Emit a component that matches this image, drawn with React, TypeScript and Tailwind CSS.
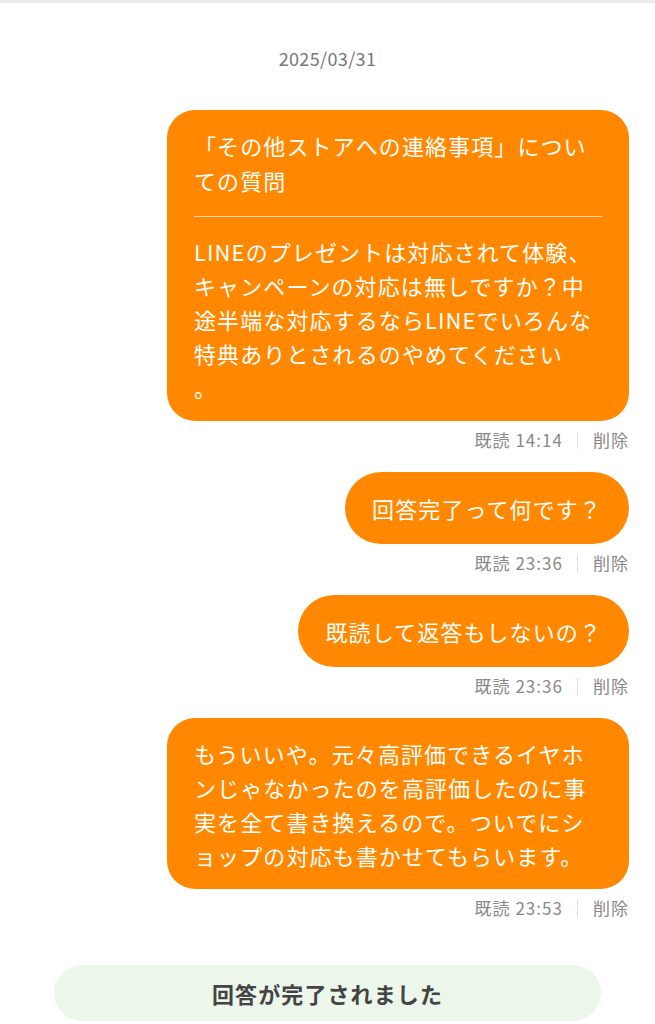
import React from 'react';

type Msg = {
  id: number;
  title?: string;
  body: React.ReactNode;
  time: string;
  multi?: boolean;
};

const messages: Msg[] = [
  {
    id: 1,
    title: '「その他ストアへの連絡事項」についての質問',
    body: (
      <>
        LINEのプレゼントは対応されて体験、キャンペーンの対応は無しですか？中途半端な対応するならLINEでいろんな特典ありとされるのやめてください
        <br />。
      </>
    ),
    time: '14:14',
    multi: true,
  },
  { id: 2, body: '回答完了って何です？', time: '23:36' },
  { id: 3, body: '既読して返答もしないの？', time: '23:36' },
  {
    id: 4,
    body: 'もういいや。元々高評価できるイヤホンじゃなかったのを高評価したのに事実を全て書き換えるので。ついでにショップの対応も書かせてもらいます。',
    time: '23:53',
    multi: true,
  },
];

function Bubble({ msg }: { msg: Msg }) {
  const shape = msg.multi ? 'rounded-[28px] pt-[18px] pb-[17px]' : 'rounded-full py-[19px]';
  return (
    <div className="flex flex-col items-end">
      <div
        className={`max-w-[462px] bg-[#ff8800] text-white text-[22px] leading-[34px] tracking-[0.05em] px-[27px] ${shape}`}
      >
        {msg.title && (
          <>
            <div className="leading-[35px]">{msg.title}</div>
            <div className="h-px bg-[#ffd9ad] mt-[18px] mb-[17px]" />
          </>
        )}
        <div>{msg.body}</div>
      </div>
      <div className="mt-[7px] h-[24px] flex items-center text-[17px] leading-[24px] text-[#888] tracking-[0.06em]">
        <span>既読 {msg.time}</span>
        <span className="ml-[14px] mr-[15px] w-px h-[17px] bg-[#dcdcdc]" />
        <span>削除</span>
      </div>
    </div>
  );
}

export default function App() {
  return (
    <div
      className="min-h-screen bg-white border-t-[3px] border-[#ebebeb]"
      style={{ fontFamily: '"Noto Sans CJK JP", "Noto Sans", sans-serif' }}
    >
      <div className="pt-[41px] text-center text-[18px] leading-[28px] text-[#777] tracking-[0.02em]">
        2025/03/31
      </div>

      <div className="mt-[38px] px-[26px] flex flex-col gap-[20px]">
        {messages.map(m => (
          <Bubble key={m.id} msg={m} />
        ))}
      </div>

      <div className="mt-[45px] mx-[54px] h-[56px] rounded-full bg-[#ecf6ea] flex items-center justify-center text-[22px] font-bold text-[#444] tracking-[0.05em]">
        回答が完了されました
      </div>
    </div>
  );
}
